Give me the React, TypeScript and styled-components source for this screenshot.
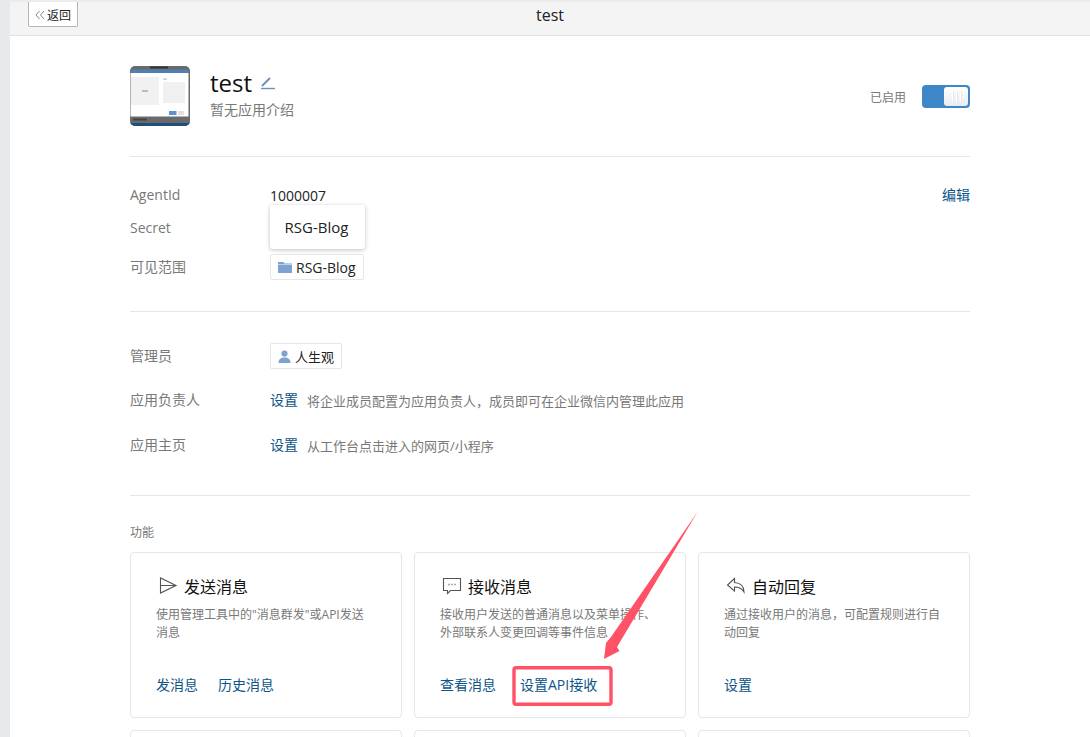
import styled, { createGlobalStyle } from "styled-components";

const GlobalStyle = createGlobalStyle`
    html, body {
        margin: 0;
        height: 737px;
        overflow: hidden;
        background: #fff;
    }
    body {
        font-family: "Open Sans", "Noto Sans CJK SC", sans-serif;
        color: #222;
    }
`;

const Page = styled.div`
    position: relative;
    height: 737px;
    overflow: hidden;
    display: flex;
`;

const Gutter = styled.div`
    flex: 0 0 10px;
    background: #e8e9eb;
`;

const Main = styled.div`
    flex: 1;
    background: #fff;
`;

const Header = styled.header`
    height: 33px;
    display: grid;
    grid-template-columns: 1fr auto 1fr;
    align-items: start;
    background: #f4f4f4;
    border-top: 2px solid #ececec;
    border-bottom: 1px solid #e2e2e2;
`;

const BackButton = styled.button`
    justify-self: start;
    margin-left: 18px;
    width: 50px;
    height: 25px;
    padding: 1px 0 0;
    display: flex;
    align-items: center;
    justify-content: center;
    gap: 2px;
    background: #fff;
    border: 1px solid #b4b4b4;
    border-top: 0;
    border-radius: 0 0 2px 2px;
    font: inherit;
    font-size: 12px;
    color: #222;
`;

const HeaderTitle = styled.div`
    font-size: 16px;
    line-height: 26px;
    color: #222;
`;

const Content = styled.div`
    width: 840px;
    margin-left: 120px;
`;

const Hero = styled.section`
    height: 120px;
    box-sizing: content-box;
    display: flex;
    align-items: flex-start;
    border-bottom: 1px solid #e4e6e9;
`;

const Thumb = styled.svg`
    flex: none;
    width: 60px;
    height: 60px;
    margin-top: 30px;
    margin-right: 20px;
`;

const HeroText = styled.div`
    flex: 1;
    padding-top: 31px;
`;

const AppName = styled.div`
    display: flex;
    align-items: center;
    gap: 8px;
    height: 32px;
    font-size: 24px;
    line-height: 32px;
    color: #111;
`;

const AppIntro = styled.div`
    margin-top: 1px;
    font-size: 14px;
    line-height: 20px;
    color: #787878;
`;

const SwitchWrap = styled.div`
    display: flex;
    align-items: center;
    gap: 16px;
    margin-top: 49px;
    font-size: 12px;
    color: #787878;
`;

const Switch = styled.div`
    box-sizing: border-box;
    width: 48px;
    height: 23px;
    padding: 2px;
    display: flex;
    justify-content: flex-end;
    background: #3d87c9;
    border-radius: 4px;
`;

const Knob = styled.div`
    width: 24px;
    height: 19px;
    display: flex;
    align-items: center;
    justify-content: center;
    gap: 3px;
    border-radius: 3px;
    background: linear-gradient(#ffffff, #e8ebf2);
`;

const Grip = styled.span`
    width: 1px;
    height: 11px;
    background: #fff;
    box-shadow: 1px 0 0 #e3e6ee;
`;

const Section = styled.section<{ $top: number; $height: number }>`
    box-sizing: border-box;
    height: ${(p) => p.$height}px;
    padding-top: ${(p) => p.$top}px;
    border-bottom: 1px solid #e4e6e9;
`;

const Row = styled.div<{ $height: number }>`
    position: relative;
    display: flex;
    align-items: flex-start;
    height: ${(p) => p.$height}px;
    font-size: 14px;
`;

const Label = styled.div`
    flex: 0 0 140px;
    height: 32px;
    line-height: 32px;
    color: #787878;
`;

const Value = styled.div`
    flex: 1;
    display: flex;
    align-items: center;
    height: 32px;
    color: #222;
`;

const Hint = styled.span`
    margin-left: 9px;
    font-size: 13px;
    color: #787878;
`;

const TextLink = styled.a`
    color: #0c5488;
    font-size: 14px;
    line-height: 32px;
    text-decoration: none;
`;

const CardLink = styled(TextLink)`
    line-height: 20px;
`;

const Tag = styled.div<{ $size: number }>`
    box-sizing: border-box;
    height: 26px;
    padding: 0 7px;
    display: flex;
    align-items: center;
    gap: 4px;
    border: 1px solid #e4e6e9;
    border-radius: 2px;
    font-size: ${(p) => p.$size}px;
    color: #222;
`;

const Tooltip = styled.div`
    position: absolute;
    left: 140px;
    top: -7px;
    width: 95px;
    height: 44px;
    padding-right: 2px;
    box-sizing: border-box;
    display: flex;
    align-items: center;
    justify-content: center;
    background: #fff;
    border-radius: 3px;
    box-shadow: 0 1px 4px rgba(0, 0, 0, 0.25);
    font-size: 15px;
    color: #222;
`;

const FeatureBlock = styled.section`
    padding-top: 28px;
`;

const FeatureTitle = styled.div`
    height: 18px;
    margin-bottom: 10px;
    font-size: 12px;
    line-height: 18px;
    color: #787878;
`;

const CardGrid = styled.div`
    display: grid;
    grid-template-columns: repeat(3, 272px);
    grid-auto-rows: 166px;
    gap: 12px;
`;

const Card = styled.div`
    box-sizing: border-box;
    padding: 22px 28px 22px 25px;
    display: flex;
    flex-direction: column;
    border: 1px solid #e4e6e9;
    border-radius: 4px;
    background: #fff;
`;

const CardHead = styled.div`
    height: 22px;
    display: flex;
    align-items: center;
    gap: 6px;
    padding-left: 2px;
    font-size: 16px;
    color: #111;
`;

const CardDesc = styled.div`
    margin-top: 9px;
    font-size: 12px;
    line-height: 18px;
    color: #787878;
`;

const CardLinks = styled.div<{ $gap: number }>`
    margin-top: auto;
    display: flex;
    gap: ${(p) => p.$gap}px;
`;

const Annotation = styled.svg`
    position: absolute;
    left: 0;
    top: 0;
    width: 1090px;
    height: 737px;
    pointer-events: none;
`;

const cards = [
    {
        title: "发送消息",
        desc: "使用管理工具中的\"消息群发\"或API发送消息",
        links: ["发消息", "历史消息"],
        gap: 20,
        icon: <path d="M2.5 2 L2.5 17 L18 9.5 Z M2.5 9.5 H18" />,
    },
    {
        title: "接收消息",
        desc: "接收用户发送的普通消息以及菜单操作、外部联系人变更回调等事件信息",
        links: ["查看消息", "设置API接收"],
        gap: 24,
        icon: (
            <>
                <path d="M1.5 2.5 H18.5 V14.5 H8.5 L5.5 17.5 V14.5 H1.5 Z" />
                <path d="M6.5 8.5 H7.5 M9.5 8.5 H10.5 M12.5 8.5 H13.5" strokeWidth="1.6" />
            </>
        ),
    },
    {
        title: "自动回复",
        desc: "通过接收用户的消息，可配置规则进行自动回复",
        links: ["设置"],
        gap: 20,
        icon: <path d="M8.5 2.5 L1.5 9 L8.5 15 V11 C13 11 16 12.5 18 16 C18 10.5 15 7 8.5 6.5 Z" />,
    },
];

const App = () => {
    return (
        <Page>
            <GlobalStyle />
            <Gutter />
            <Main>
                <Header>
                    <BackButton>
                        <svg width="10" height="10" viewBox="0 0 10 10" fill="none" stroke="#888" strokeWidth="1">
                            <path d="M4.5 1 L1 5 L4.5 9 M9 1 L5.5 5 L9 9" />
                        </svg>
                        返回
                    </BackButton>
                    <HeaderTitle>test</HeaderTitle>
                </Header>
                <Content>
                    <Hero>
                        <Thumb viewBox="0 0 60 60">
                            <rect width="60" height="60" rx="5" fill="#6a6a6a" />
                            <rect x="20" y="0.5" width="18" height="2" fill="#333" />
                            <rect x="0.5" y="3.5" width="58" height="3.5" fill="#4f7fb3" />
                            <rect x="0.5" y="7" width="58" height="43.5" fill="#fff" />
                            <rect x="1" y="11" width="28" height="28" fill="#f1f1f2" />
                            <rect x="33" y="16" width="22" height="21" fill="#f0f0f1" />
                            <rect x="33" y="12.5" width="4" height="1.5" fill="#ccc" />
                            <rect x="12" y="24" width="6" height="2" fill="#bbb" />
                            <rect x="39" y="45" width="7.5" height="4" fill="#5b93cc" />
                            <rect x="48" y="45" width="6" height="4" fill="#e2e2e2" />
                            <rect x="3" y="52.5" width="14" height="2" fill="#444" />
                            <path d="M0 57 H60 V55 A5 5 0 0 1 55 60 H5 A5 5 0 0 1 0 55 Z" fill="#1f4f7a" />
                        </Thumb>
                        <HeroText>
                            <AppName>
                                test
                                <svg width="16" height="14" viewBox="0 0 16 14" fill="none" stroke="#6f8fb5">
                                    <path d="M2 10 L10 2" strokeWidth="2" />
                                    <path d="M1 12.5 H15" strokeWidth="1.4" />
                                </svg>
                            </AppName>
                            <AppIntro>暂无应用介绍</AppIntro>
                        </HeroText>
                        <SwitchWrap>
                            已启用
                            <Switch>
                                <Knob>
                                    <Grip />
                                    <Grip />
                                    <Grip />
                                </Knob>
                            </Switch>
                        </SwitchWrap>
                    </Hero>
                    <Section $top={22} $height={155}>
                        <Row $height={33}>
                            <Label>AgentId</Label>
                            <Value>1000007</Value>
                            <TextLink>编辑</TextLink>
                        </Row>
                        <Row $height={39}>
                            <Label>Secret</Label>
                            <Tooltip>RSG-Blog</Tooltip>
                        </Row>
                        <Row $height={32}>
                            <Label>可见范围</Label>
                            <Value>
                                <Tag $size={14}>
                                    <svg width="14" height="12" viewBox="0 0 14 12" fill="#7ea3d0">
                                        <path d="M0 1 H5.5 L6.5 2.5 H14 V3.5 H0 Z M0 4 H14 V12 H0 Z" />
                                    </svg>
                                    RSG-Blog
                                </Tag>
                            </Value>
                        </Row>
                    </Section>
                    <Section $top={28} $height={184}>
                        <Row $height={44}>
                            <Label>管理员</Label>
                            <Value>
                                <Tag $size={13}>
                                    <svg width="13" height="13" viewBox="0 0 13 13" fill="#7ea3d0">
                                        <circle cx="6.5" cy="3.6" r="3.1" />
                                        <path d="M0.5 13 C0.5 9 3 7.5 6.5 7.5 C10 7.5 12.5 9 12.5 13 Z" />
                                    </svg>
                                    人生观
                                </Tag>
                            </Value>
                        </Row>
                        <Row $height={45}>
                            <Label>应用负责人</Label>
                            <Value>
                                <TextLink>设置</TextLink>
                                <Hint>将企业成员配置为应用负责人，成员即可在企业微信内管理此应用</Hint>
                            </Value>
                        </Row>
                        <Row $height={32}>
                            <Label>应用主页</Label>
                            <Value>
                                <TextLink>设置</TextLink>
                                <Hint>从工作台点击进入的网页/小程序</Hint>
                            </Value>
                        </Row>
                    </Section>
                    <FeatureBlock>
                        <FeatureTitle>功能</FeatureTitle>
                        <CardGrid>
                            {cards.map((card) => (
                                <Card key={card.title}>
                                    <CardHead>
                                        <svg width="20" height="20" viewBox="0 0 20 20" fill="none" stroke="#555" strokeWidth="1.1">
                                            {card.icon}
                                        </svg>
                                        {card.title}
                                    </CardHead>
                                    <CardDesc>{card.desc}</CardDesc>
                                    <CardLinks $gap={card.gap}>
                                        {card.links.map((link) => (
                                            <CardLink key={link}>{link}</CardLink>
                                        ))}
                                    </CardLinks>
                                </Card>
                            ))}
                            <Card />
                            <Card />
                            <Card />
                        </CardGrid>
                    </FeatureBlock>
                </Content>
            </Main>
            <Annotation viewBox="0 0 1090 737">
                <rect x="514" y="667.7" width="97" height="36.5" rx="2" fill="none" stroke="#ff5266" strokeWidth="3.4" />
                <polygon points="697.5,512 617,647 619.5,651 604,659 606,643 611,637" fill="#ff5266" />
            </Annotation>
        </Page>
    );
};

export default App;
